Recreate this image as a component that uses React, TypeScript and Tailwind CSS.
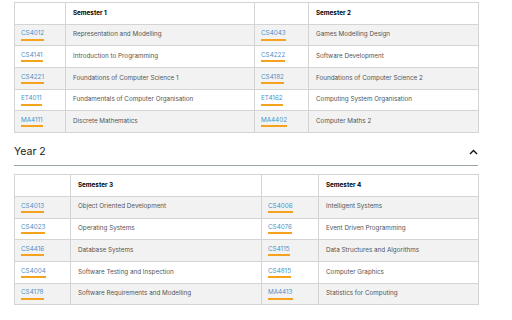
import React from 'react';

type Course = { code: string; name: string };

type SemesterPair = {
  left: string;
  right: string;
  leftCourses: Course[];
  rightCourses: Course[];
  widths: [number, number, number, number];
};

const year1: SemesterPair = {
  left: 'Semester 1',
  right: 'Semester 2',
  widths: [51, 189, 54, 170],
  leftCourses: [
    { code: 'CS4012', name: 'Representation and Modelling' },
    { code: 'CS4141', name: 'Introduction to Programming' },
    { code: 'CS4221', name: 'Foundations of Computer Science 1' },
    { code: 'ET4011', name: 'Fundamentals of Computer Organisation' },
    { code: 'MA4111', name: 'Discrete Mathematics' },
  ],
  rightCourses: [
    { code: 'CS4043', name: 'Games Modelling Design' },
    { code: 'CS4222', name: 'Software Development' },
    { code: 'CS4182', name: 'Foundations of Computer Science 2' },
    { code: 'ET4162', name: 'Computing System Organisation' },
    { code: 'MA4402', name: 'Computer Maths 2' },
  ],
};

const year2: SemesterPair = {
  left: 'Semester 3',
  right: 'Semester 4',
  widths: [56, 191, 57, 160],
  leftCourses: [
    { code: 'CS4013', name: 'Object Oriented Development' },
    { code: 'CS4023', name: 'Operating Systems' },
    { code: 'CS4416', name: 'Database Systems' },
    { code: 'CS4004', name: 'Software Testing and Inspection' },
    { code: 'CS4178', name: 'Software Requirements and Modelling' },
  ],
  rightCourses: [
    { code: 'CS4006', name: 'Intelligent Systems' },
    { code: 'CS4076', name: 'Event Driven Programming' },
    { code: 'CS4115', name: 'Data Structures and Algorithms' },
    { code: 'CS4815', name: 'Computer Graphics' },
    { code: 'MA4413', name: 'Statistics for Computing' },
  ],
};

const CodeLink = ({ code }: { code: string }) => (
  <a className="inline-block leading-none pb-[2px] border-b-2 border-[#f5a31f] text-[#4a93c8]">{code}</a>
);

const SemesterTable = ({ data }: { data: SemesterPair }) => (
  <table className="table-fixed w-[464px] border-collapse border border-[#c4c4c4] text-[6.3px] text-[#555]">
    <colgroup>
      {data.widths.map((w, i) => (
        <col key={i} style={{ width: w }} />
      ))}
    </colgroup>
    <tbody>
      <tr className="h-[21.7px] bg-white">
        <td className="border border-[#d4d4d4]" />
        <td className="border border-[#d4d4d4] px-[7px] font-bold text-black">{data.left}</td>
        <td className="border border-[#d4d4d4]" />
        <td className="border border-[#d4d4d4] px-[7px] font-bold text-black">{data.right}</td>
      </tr>
      {data.leftCourses.map((c, i) => (
        <tr key={c.code} className={`h-[21.7px] ${i % 2 === 0 ? 'bg-[#f2f2f2]' : 'bg-white'}`}>
          <td className="border border-[#d4d4d4] px-[6px]">
            <CodeLink code={c.code} />
          </td>
          <td className="border border-[#d4d4d4] px-[7px]">{c.name}</td>
          <td className="border border-[#d4d4d4] px-[6px]">
            <CodeLink code={data.rightCourses[i].code} />
          </td>
          <td className="border border-[#d4d4d4] px-[7px]">{data.rightCourses[i].name}</td>
        </tr>
      ))}
    </tbody>
  </table>
);

export default function App() {
  return (
    <div className="w-[512px] h-[320px] bg-white overflow-hidden" style={{ fontFamily: 'Inter, "Liberation Sans", sans-serif' }}>
      <div className="ml-[14px] w-[464px] pt-[2px]">
        <SemesterTable data={year1} />

        <div className="mt-[12px] flex items-center justify-between border-b border-[#9aa5a5] pb-[6px]">
          <h3 className="text-[10.5px] leading-[14px] text-[#222]">Year 2</h3>
          <svg width="9" height="6" viewBox="0 0 9 6">
            <path d="M1 5 L4.5 1.5 L8 5" fill="none" stroke="#111" strokeWidth="1.4" />
          </svg>
        </div>

        <div className="mt-[8px]">
          <SemesterTable data={year2} />
        </div>
      </div>
    </div>
  );
}
